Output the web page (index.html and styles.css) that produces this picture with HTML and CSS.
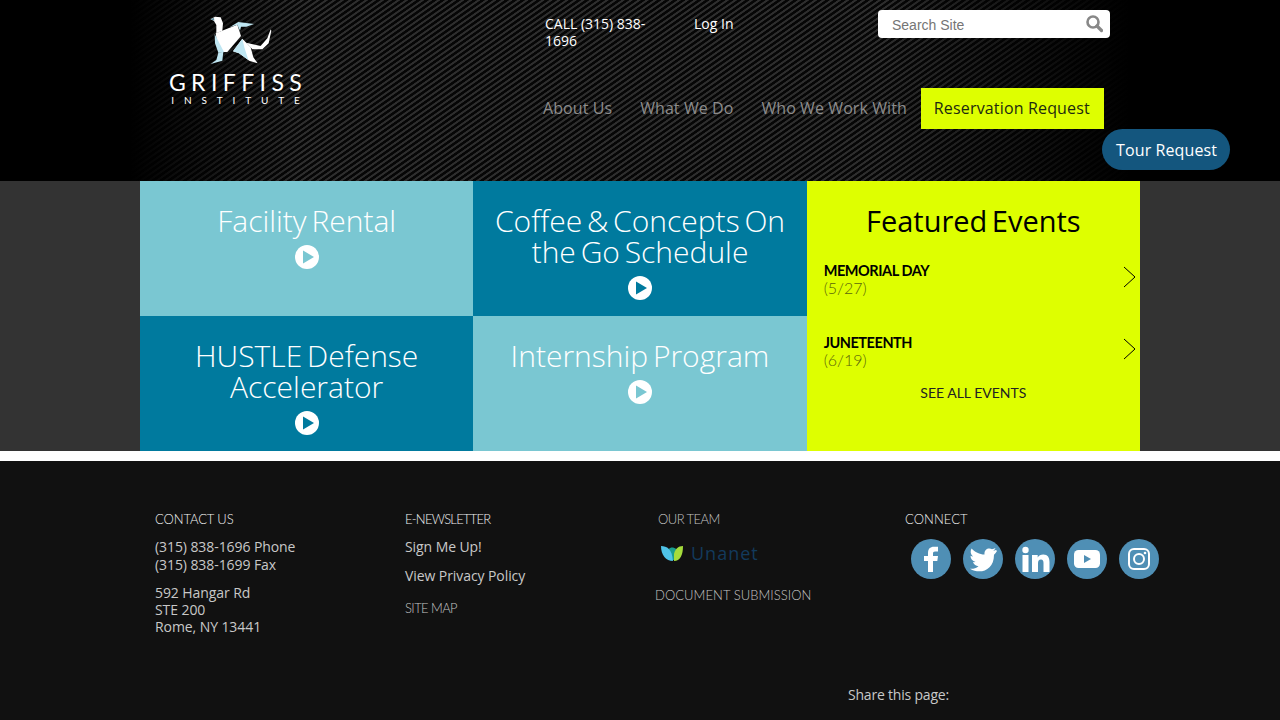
FILE: index.html
```html
<!DOCTYPE html>
<html lang="en">
<head>
<meta charset="utf-8">
<title>Griffiss Institute</title>
<link rel="stylesheet" href="styles.css">
</head>
<body>
<header class="header">
  <div class="header-inner">
    <a class="logo" href="#">
      <svg class="griffin" width="64" height="52" viewBox="150 15 192 156" aria-hidden="true">
        <path fill="#fff" d="M155 28 168 20 185 22 192 40 190 62 172 70 172 45 165 33z"/>
        <path fill="#5d8a9a" d="M153 27l12-3 1 8z"/>
        <path fill="#fff" d="M170 70 235 44 246 78 205 126 178 127z"/>
        <path fill="#bfe6f2" d="M167 72l28 54-17 2-10-28zM212 52 238 36 285 42 262 50 246 50 243 62 235 44z"/>
        <path fill="#bfe6f2" d="M178 128 193 125 190 152 155 162 172 150z"/>
        <path fill="#fff" d="M222 124 250 86 275 112 283 142 296 160 272 153 240 130z"/>
        <path fill="#bfe6f2" d="M222 124 250 86 256 112 268 150 240 130z"/>
        <path fill="#fff" d="M262 98 305 108 325 85 335 58 337 62 329 100 310 118 280 118z"/>
      </svg>
      <span class="logo-name">GRIFFISS</span>
      <span class="logo-sub">INSTITUTE</span>
    </a>
    <div class="header-right">
      <div class="top-row">
        <a class="call" href="#">CALL (315) 838-1696</a>
        <a class="login" href="#">Log In</a>
        <form class="search">
          <span class="search-text">Search Site</span>
          <svg width="18" height="18" viewBox="0 0 18 18" aria-hidden="true"><circle cx="8" cy="7" r="5.5" fill="none" stroke="#888" stroke-width="2.600"/><path d="M12 11l4.500 4.500" stroke="#888" stroke-width="3.200" stroke-linecap="round"/></svg>
        </form>
      </div>
      <nav class="nav">
        <a href="#">About Us</a>
        <a href="#">What We Do</a>
        <a href="#">Who We Work With</a>
        <a class="nav-cta" href="#">Reservation Request</a>
      </nav>
      <div class="tour-row"><a class="tour" href="#">Tour Request</a></div>
    </div>
  </div>
</header>

<section class="band">
  <div class="tiles">
    <a class="tile light" href="#"><h2>Facility Rental</h2>
      <svg class="play" viewBox="0 0 24 24" aria-hidden="true"><circle cx="12" cy="12" r="12" fill="#fff"/><path d="M8 5.500 19 12 8 18.500z" fill="#7ac7d2"/></svg></a>
    <a class="tile dark" href="#"><h2>Coffee &amp; Concepts On the Go Schedule</h2>
      <svg class="play" viewBox="0 0 24 24" aria-hidden="true"><circle cx="12" cy="12" r="12" fill="#fff"/><path d="M8 5.500 19 12 8 18.500z" fill="#007a9e"/></svg></a>
    <div class="events">
      <h2>Featured Events</h2>
      <a class="event" href="#"><span class="event-text"><b>MEMORIAL DAY</b><span>(5/27)</span></span>
        <svg width="13" height="22" viewBox="0 0 13 22" aria-hidden="true"><path d="M1 1l11 10L1 21" fill="none" stroke="#000"/></svg></a>
      <a class="event" href="#"><span class="event-text"><b>JUNETEENTH</b><span>(6/19)</span></span>
        <svg width="13" height="22" viewBox="0 0 13 22" aria-hidden="true"><path d="M1 1l11 10L1 21" fill="none" stroke="#000"/></svg></a>
      <a class="all-events" href="#">SEE ALL EVENTS</a>
    </div>
    <a class="tile dark" href="#"><h2>HUSTLE Defense Accelerator</h2>
      <svg class="play" viewBox="0 0 24 24" aria-hidden="true"><circle cx="12" cy="12" r="12" fill="#fff"/><path d="M8 5.500 19 12 8 18.500z" fill="#007a9e"/></svg></a>
    <a class="tile light" href="#"><h2>Internship Program</h2>
      <svg class="play" viewBox="0 0 24 24" aria-hidden="true"><circle cx="12" cy="12" r="12" fill="#fff"/><path d="M8 5.500 19 12 8 18.500z" fill="#7ac7d2"/></svg></a>
  </div>
</section>

<footer class="footer">
  <div class="footer-cols">
    <div class="col col-contact">
      <h3>CONTACT US</h3>
      <p class="phones">(315) 838-1696 Phone<br>(315) 838-1699 Fax</p>
      <p>592 Hangar Rd<br>STE 200<br>Rome, NY 13441</p>
    </div>
    <div class="col col-news">
      <h3>E-NEWSLETTER</h3>
      <p>Sign Me Up!</p>
      <p>View Privacy Policy</p>
      <h3 class="dim">SITE MAP</h3>
    </div>
    <div class="col col-team">
      <h3 class="dim team-title">OUR TEAM</h3>
      <div class="unanet">
        <svg width="23" height="16" viewBox="0 0 23 16" aria-hidden="true">
          <path fill="#1b9e8f" d="M8 4c1-2 5-2 7 0l-1 11H9z"/>
          <path fill="#4fc3e8" d="M0 1c6 0 11 3 12 15C5 16 0 10 0 1z"/>
          <path fill="#a5dc3c" d="M22 1c-5 0-8 3-9 8l0 7c6 0 9-6 9-15z"/>
        </svg>
        <span>Unanet</span>
      </div>
      <h3 class="dim doc-title">DOCUMENT SUBMISSION</h3>
    </div>
    <div class="col col-connect">
      <h3>CONNECT</h3>
      <div class="socials">
        <a href="#" aria-label="Facebook"><svg viewBox="0 0 40 40"><circle cx="20" cy="20" r="20" fill="#4f8fb5"/><path fill="#fff" d="M17 33V22h-4v-5h4v-3c0-4 2-6.200 6-6.200h4v4.800h-3c-1.500 0-2 .7-2 2V17h5l-.7 5H22v11z"/></svg></a>
        <a href="#" aria-label="Twitter"><svg viewBox="0 0 40 40"><circle cx="20" cy="20" r="20" fill="#4f8fb5"/><path fill="#fff" d="M33 11c-1 .5-2 .8-3 1 1-.7 2-1.800 2.400-3-1 .6-2.200 1-3.400 1.300C26 8.500 21 10 21.500 15.500 16.500 15.500 12 13 8.500 9.500c-1.500 2.800-1 6 1.500 8-1 0-1.800-.3-2.500-.7 0 3 2 5.500 5 6.200-.8.200-1.700.2-2.500 0 .8 2.400 3 4 5.500 4.200-2.500 2-5.500 2.800-8.500 2.500 10 6 24 2 24-14 1.200-1 2.200-2.400 3-3.700z"/></svg></a>
        <a href="#" aria-label="LinkedIn"><svg viewBox="0 0 40 40"><circle cx="20" cy="20" r="20" fill="#4f8fb5"/><circle cx="10.500" cy="11" r="3.200" fill="#fff"/><path fill="#fff" d="M7.500 16h6v17h-6zM17 16h5.700v2.500c1-1.800 3-3 5.600-3 4.500 0 6.200 3 6.200 7.500V33h-6v-9c0-2.200-.7-3.500-2.500-3.500-2.200 0-3 1.600-3 3.700V33h-6z"/></svg></a>
        <a href="#" aria-label="YouTube"><svg viewBox="0 0 40 40"><circle cx="20" cy="20" r="20" fill="#4f8fb5"/><rect x="7" y="11" width="26" height="18" rx="4.500" fill="#fff"/><path fill="#4f8fb5" d="M17 16l7 4-7 4z"/></svg></a>
        <a href="#" aria-label="Instagram"><svg viewBox="0 0 40 40"><circle cx="20" cy="20" r="20" fill="#4f8fb5"/><rect x="10" y="10" width="20" height="20" rx="5" fill="none" stroke="#fff" stroke-width="2"/><circle cx="20" cy="20" r="5" fill="none" stroke="#fff" stroke-width="2"/><circle cx="26" cy="14" r="1.300" fill="#fff"/></svg></a>
      </div>
    </div>
  </div>
  <div class="share">Share this page:</div>
</footer>
</body>
</html>
```
FILE: styles.css
```css
* { box-sizing: border-box; }
html, body { margin: 0; padding: 0; }
body { width: 1280px; height: 720px; overflow: hidden; background: #111; font-family: "Open Sans", "Noto Sans", sans-serif; }
a { color: inherit; text-decoration: none; }
h2, h3, p { margin: 0; font-weight: normal; }

.header { height: 181px; background-color: #000; background-image: linear-gradient(90deg, #000 130px, rgba(0,0,0,0) 300px, rgba(0,0,0,0) 880px, #000 1130px), repeating-linear-gradient(145deg, #060606 0, #060606 2px, #2e2e2e 2.600px, #2e2e2e 4px, #060606 4.600px); }
.header-inner { display: flex; width: 1100px; margin-left: 130px; }
.logo { display: flex; flex-direction: column; align-items: center; width: 133px; margin: 15px 0 0 39px; color: #fff; height: 92px; }
.griffin { display: block; margin: 0 0 0 10px; flex: none; }
.logo-name { font-family: "Lato", sans-serif; font-size: 23px; line-height: 20px; letter-spacing: 5.400px; margin-top: 5px; white-space: nowrap; margin-right: -5px; }
.logo-sub { font-family: "Lato", sans-serif; font-size: 10px; line-height: 10px; letter-spacing: 9.900px; margin-top: 3px; white-space: nowrap; margin-right: -10px; }

.header-right { display: flex; flex-direction: column; margin-left: 228px; width: 700px; }
.top-row { display: flex; height: 88px; color: #fff; font-size: 14px; line-height: 17px; }
.call { width: 110px; margin: 15px 39px 0 15px; flex: none; }
.login { width: 184px; margin-top: 15px; flex: none; }
.search { display: flex; justify-content: space-between; width: 232px; height: 28px; margin-top: 10px; padding: 5px 7px 0 14px; background: #fff; border-radius: 4px; flex: none; }
.search-text { font-family: "Liberation Sans", Arial, sans-serif; font-size: 14px; line-height: 21px; color: #757575; }
.nav { display: flex; font-size: 16px; height: 41px; align-items: center; color: #8c8c8c; margin-left: -1px; letter-spacing: .08px; }
.nav a { padding: 0 14px; line-height: 41px; white-space: nowrap; }
.nav .nav-cta { padding: 0 14px 0 13px; background: #deff00; color: #1d2a10; letter-spacing: .16px; }
.tour-row { display: flex; justify-content: flex-end; }
.tour { height: 41px; line-height: 43px; padding: 0 13px 0 14px; border-radius: 21px; background: #14567e; color: #fff; font-size: 16px; letter-spacing: .1px; white-space: nowrap; }

.band { height: 270px; background: #333; }
.tiles { display: grid; grid-template-columns: repeat(3, 1fr); grid-template-rows: 135px 135px; width: 1000px; margin: 0 auto; }
.tile { display: flex; flex-direction: column; align-items: center; padding: 24px 20px 0; color: #fff; text-align: center; }
.tile h2, .events h2 { font-family: "Open Sans", sans-serif; font-size: 30px; line-height: 31px; font-weight: 300; word-spacing: -3px; }
.light { background: #7ac7d2; }
.dark { background: #007a9e; }
.play { display: block; width: 24px; height: 24px; margin-top: 9px; flex: none; }
.events { grid-column: 3; grid-row: 1 / span 2; background: #deff00; padding: 24px 4px 0 17px; color: #000; }
.events h2 { text-align: center; margin-right: 13px; font-size: 29px; font-weight: 400; }
.event { display: flex; justify-content: space-between; align-items: center; height: 72px; padding-bottom: 3px; }
.events h2 + .event { margin-top: 6px; }
.event-text { display: flex; flex-direction: column; margin-top: 4px; font-family: "Lato", sans-serif; font-size: 14.500px; line-height: 17px; }
.event-text b { font-weight: 700; letter-spacing: -.45px; }
.event-text span { color: #5a660a; font-size: 16px; font-weight: 300; line-height: 17px; }
.all-events { display: block; margin-top: -2px; margin-right: 13px; text-align: center; font-family: "Lato", sans-serif; font-size: 14px; line-height: 18px; color: #222; }

.footer { height: 269px; background: #111; position: relative; border-top: 10px solid #fff; color: #c8c8c8; font-size: 14px; line-height: 17px; letter-spacing: -.08px; }
.footer-cols { display: flex; padding: 50px 0 0 155px; }
.col h3 { font-family: "Lato", sans-serif; font-size: 13px; line-height: 17px; font-weight: 300; color: #f2f2f2; letter-spacing: -.1px; }
.col h3.dim { color: #c4c4c4; }
.col-contact { width: 250px; }
.col-contact p { margin-top: 10px; }
.col-contact .phones { margin-top: 10px; line-height: 18px; }
.col-news { width: 253px; }
.col-news p { margin-top: 12px; }
.col-news h3 { letter-spacing: -.75px; }
.col-news h3 + p { margin-top: 10px; }
.col-news .dim { margin-top: 16px; letter-spacing: -.6px; }
.col-team { width: 250px; margin-left: -3px; }
.col-team .team-title { margin-left: 3px; letter-spacing: -.55px; }
.unanet { display: flex; align-items: center; gap: 7px; height: 20px; margin: 15px 0 0 6px; font-family: "Open Sans", sans-serif; font-size: 18px; letter-spacing: 1px; color: #133a5c; }
.col-team .doc-title { margin-top: 24px; letter-spacing: .05px; }
.col-connect h3 { letter-spacing: .05px; }
.socials { display: flex; gap: 12px; margin: 11px 0 0 6px; }
.socials a { display: block; width: 40px; height: 40px; }
.socials svg { display: block; width: 40px; height: 40px; }
.share { position: absolute; left: 848px; top: 225px; letter-spacing: -.2px; }
```
